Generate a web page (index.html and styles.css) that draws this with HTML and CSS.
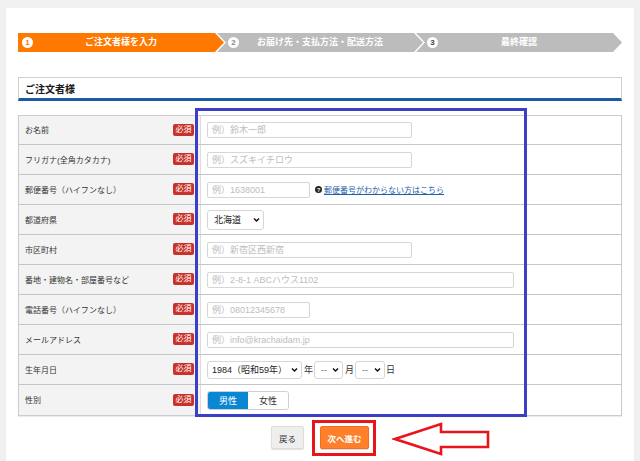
FILE: index.html
```html
<!DOCTYPE html>
<html lang="ja">
<head>
<meta charset="utf-8">
<title>ご注文者様</title>
<link rel="stylesheet" href="styles.css">
</head>
<body>
<div class="panel">
  <ol class="steps">
    <li class="step step-active"><span class="num">1</span><span class="step-label">ご注文者様を入力</span></li>
    <li class="step"><span class="num">2</span><span class="step-label">お届け先・支払方法・配送方法</span></li>
    <li class="step"><span class="num num-dark">3</span><span class="step-label">最終確認</span></li>
  </ol>

  <h2 class="section-title">ご注文者様</h2>

  <div class="form-wrap">
    <div class="form-table">
      <div class="row">
        <div class="label"><span>お名前</span><span class="req">必須</span></div>
        <div class="value"><input class="input w-m" placeholder="例）鈴木一郎"></div>
      </div>
      <div class="row">
        <div class="label"><span>フリガナ(全角カタカナ)</span><span class="req">必須</span></div>
        <div class="value"><input class="input w-m" placeholder="例）スズキイチロウ"></div>
      </div>
      <div class="row">
        <div class="label"><span>郵便番号（ハイフンなし）</span><span class="req">必須</span></div>
        <div class="value">
          <input class="input w-s" placeholder="例）1638001">
          <span class="help"><span class="qicon">?</span><a class="help-link" href="#">郵便番号がわからない方はこちら</a></span>
        </div>
      </div>
      <div class="row">
        <div class="label"><span>都道府県</span><span class="req">必須</span></div>
        <div class="value">
          <span class="select sel-pref"><select><option>北海道</option></select><svg class="chev" viewBox="0 0 8 6"><path d="M1 1.2l3 3 3-3" fill="none" stroke="#111" stroke-width="1.8"/></svg></span>
        </div>
      </div>
      <div class="row">
        <div class="label"><span>市区町村</span><span class="req">必須</span></div>
        <div class="value"><input class="input w-m" placeholder="例）新宿区西新宿"></div>
      </div>
      <div class="row">
        <div class="label"><span>番地・建物名・部屋番号など</span><span class="req">必須</span></div>
        <div class="value"><input class="input w-l" placeholder="例）2-8-1 ABCハウス1102"></div>
      </div>
      <div class="row">
        <div class="label"><span>電話番号（ハイフンなし）</span><span class="req">必須</span></div>
        <div class="value"><input class="input w-s" placeholder="例）08012345678"></div>
      </div>
      <div class="row">
        <div class="label"><span>メールアドレス</span><span class="req">必須</span></div>
        <div class="value"><input class="input w-l" placeholder="例）info@krachaidam.jp"></div>
      </div>
      <div class="row">
        <div class="label"><span>生年月日</span><span class="req">必須</span></div>
        <div class="value birth">
          <span class="select sel-year"><select><option>1984（昭和59年）</option></select><svg class="chev" viewBox="0 0 8 6"><path d="M1 1.2l3 3 3-3" fill="none" stroke="#111" stroke-width="1.8"/></svg></span>
          <span class="unit">年</span>
          <span class="select sel-md"><select><option>--</option></select><svg class="chev" viewBox="0 0 8 6"><path d="M1 1.2l3 3 3-3" fill="none" stroke="#111" stroke-width="1.8"/></svg></span>
          <span class="unit">月</span>
          <span class="select sel-md sel-day"><select><option>--</option></select><svg class="chev" viewBox="0 0 8 6"><path d="M1 1.2l3 3 3-3" fill="none" stroke="#111" stroke-width="1.8"/></svg></span>
          <span class="unit">日</span>
        </div>
      </div>
      <div class="row">
        <div class="label"><span>性別</span><span class="req">必須</span></div>
        <div class="value">
          <span class="toggle"><span class="tg tg-on">男性</span><span class="tg">女性</span></span>
        </div>
      </div>
    </div>
    <div class="annot-blue"></div>
  </div>

  <div class="actions">
    <button class="btn btn-back">戻る</button>
    <span class="next-wrap"><button class="btn btn-next">次へ進む</button></span>
    <svg class="arrow" viewBox="0 0 100 36" width="100" height="36">
      <polygon points="3,18 49,3 49,11 96,11 96,26 49,26 49,33" fill="none" stroke="#e8151d" stroke-width="2.6" stroke-linejoin="miter"/>
    </svg>
  </div>
</div>
</body>
</html>
```

FILE: styles.css
```css
* { box-sizing: border-box; }
html, body { margin: 0; }
body {
  background: #f0f0f0;
  font-family: "Liberation Sans", "Noto Sans CJK JP", sans-serif;
  color: #333;
}
.panel {
  margin: 8px 6px 0;
  background: #fff;
  padding: 25px 12px 20px;
  min-height: 453px;
}

/* progress steps */
.steps {
  list-style: none;
  margin: 0;
  padding: 0;
  display: flex;
  height: 19px;
}
.step {
  flex: 1;
  display: grid;
  align-items: center;
  background: #bcbcbc;
  color: #fff;
  font-size: 9px;
  font-weight: bold;
  margin-left: -7px;
  clip-path: polygon(0 0, calc(100% - 9px) 0, 100% 50%, calc(100% - 9px) 100%, 0 100%, 9px 50%);
}
.step-active {
  background: #ff7800;
  margin-left: 0;
  clip-path: polygon(0 0, calc(100% - 9px) 0, 100% 50%, calc(100% - 9px) 100%, 0 100%);
}
.num, .step-label { grid-area: 1 / 1; }
.num {
  justify-self: start;
  margin-left: 11px;
  width: 11px;
  height: 11px;
  border-radius: 50%;
  background: #fff;
  color: #888;
  font-size: 8px;
  display: flex;
  align-items: center;
  justify-content: center;
  line-height: 1;
}
.step-active .num { margin-left: 4px; color: #ff7800; }
.num-dark { color: #444; }
.step-label { justify-self: center; line-height: 1; }

/* section title */
.section-title {
  margin: 25px 0 0;
  height: 24px;
  border: 1px solid #cfcfcf;
  border-bottom: 3px solid #1b5aa5;
  font-size: 10px;
  font-weight: bold;
  color: #1a1a1a;
  padding-left: 6px;
  display: flex;
  align-items: center;
}

/* form table */
.form-wrap {
  position: relative;
  margin-top: 14px;
}
.form-table {
  border: 1px solid #cccccc;
  box-shadow: 0 1px 1px rgba(0,0,0,0.08);
}
.row {
  display: grid;
  grid-template-columns: 182px 1fr;
  height: 30px;
  border-top: 1px solid #c6c6c6;
}
.row:first-child { border-top: none; height: 28px; }
.row:last-child { height: 31px; }
.label {
  background: #f3f3f3;
  border-right: 1px solid #dcdcdc;
  display: flex;
  align-items: center;
  justify-content: space-between;
  padding: 0 6px 1px;
  font-size: 8px;
  color: #333;
}
.req {
  background: #c8322b;
  color: #fff;
  font-size: 8px;
  width: 21px;
  height: 12px;
  border-radius: 2px;
  display: flex;
  align-items: center;
  justify-content: center;
  line-height: 1;
}
.value {
  display: flex;
  align-items: center;
  padding-left: 6px;
  background: #fff;
}
.input {
  height: 16px;
  border: 1px solid #d6d6d6;
  border-radius: 2px;
  padding: 0 4px;
  font-family: inherit;
  font-size: 9px;
  color: #333;
  background: #fff;
  outline: none;
}
.input::placeholder { color: #bdbdbd; }
.w-s { width: 103px; }
.w-m { width: 205px; }
.w-l { width: 307px; }

.help {
  display: flex;
  align-items: center;
  margin-left: 5px;
  font-size: 8px;
}
.qicon {
  width: 7px;
  height: 7px;
  border-radius: 50%;
  background: #222;
  color: #fff;
  font-size: 6px;
  font-weight: bold;
  display: flex;
  align-items: center;
  justify-content: center;
  margin-right: 2px;
  line-height: 1;
}
.help-link { color: #1f5faa; text-decoration: underline; }

/* selects */
.select {
  position: relative;
  display: inline-flex;
}
.select select {
  appearance: none;
  -webkit-appearance: none;
  border: 1px solid #d6d6d6;
  border-radius: 3px;
  background: #fff;
  font-family: inherit;
  font-size: 9px;
  color: #222;
  padding: 0 12px 0 6px;
  margin: 0;
  outline: none;
}
.chev {
  position: absolute;
  right: 4px;
  top: 50%;
  width: 7px;
  height: 5px;
  transform: translateY(-50%);
  pointer-events: none;
}
.sel-pref select { width: 57px; height: 20px; }
.sel-year select { width: 95px; height: 18px; padding-left: 4px; }
.sel-md select { width: 29px; height: 18px; color: #666; padding-left: 6px; }
.sel-day select { width: 30px; }
.unit { font-size: 9px; color: #333; margin: 0 1px 0 2px; }
.birth .unit:last-child { margin-left: 1px; }

/* toggle */
.toggle {
  display: inline-flex;
  border: 1px solid #cfcfcf;
  border-radius: 3px;
  overflow: hidden;
  height: 19px;
}
.tg {
  width: 40px;
  display: flex;
  align-items: center;
  justify-content: center;
  font-size: 9px;
  color: #333;
  background: #fff;
}
.tg-on { background: #0a87d2; color: #fff; }

/* annotation boxes */
.annot-blue {
  position: absolute;
  left: 177px;
  top: -7px;
  width: 332px;
  height: 309px;
  border: 3px solid #3c3fc6;
  pointer-events: none;
}

/* actions */
.actions {
  position: relative;
  margin-top: 10px;
  display: flex;
  justify-content: center;
  gap: 16px;
}
.btn {
  height: 23px;
  border-radius: 2px;
  font-family: inherit;
  font-size: 8.5px;
  padding: 0;
  cursor: pointer;
}
.btn-back {
  width: 33px;
  background: #eeeeee;
  border: 1px solid #dddddd;
  color: #333;
  box-shadow: 0 1px 1px rgba(0,0,0,0.12);
}
.next-wrap {
  position: relative;
  display: inline-flex;
}
.next-wrap::after {
  content: "";
  position: absolute;
  left: -8px;
  top: -6px;
  right: -7px;
  bottom: -7px;
  border: 3px solid #e8151d;
  pointer-events: none;
}
.btn-next {
  width: 49px;
  background: #ff7f2a;
  border: 1px solid #f07020;
  color: #fff;
  font-weight: bold;
  box-shadow: 0 1px 1px rgba(0,0,0,0.15);
}
.arrow {
  position: absolute;
  left: 374px;
  top: -5px;
}
```
